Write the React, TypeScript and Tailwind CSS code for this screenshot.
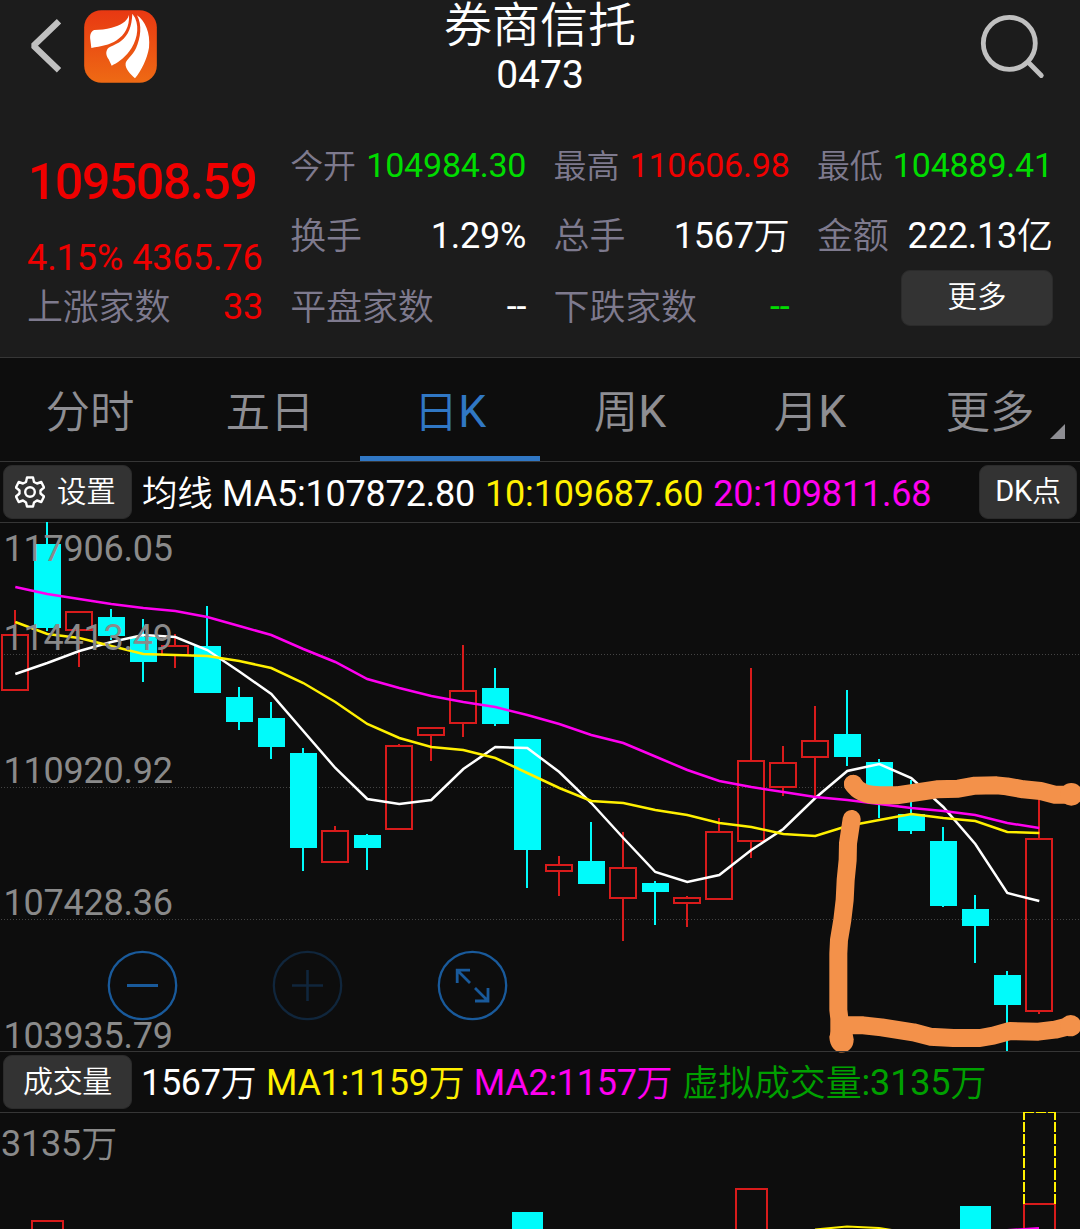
type Candle = [up: boolean, high: number, top: number, bottom: number, low: number];

const candles: Candle[] = [
  [true, 610, 634, 691, 691],
  [false, 522, 544, 628, 631],
  [true, 611, 611, 631, 667],
  [false, 609, 617, 636, 640],
  [false, 619, 637, 662, 682],
  [true, 634, 645, 656, 668],
  [false, 606, 646, 693, 693],
  [false, 687, 697, 722, 730],
  [false, 702, 718, 747, 759],
  [false, 748, 753, 848, 871],
  [true, 826, 830, 863, 863],
  [false, 834, 835, 848, 870],
  [true, 744, 745, 830, 830],
  [true, 727, 727, 736, 761],
  [true, 645, 690, 724, 737],
  [false, 668, 688, 724, 726],
  [false, 739, 739, 850, 888],
  [true, 856, 864, 872, 896],
  [false, 822, 861, 884, 884],
  [true, 832, 867, 899, 941],
  [false, 881, 883, 892, 925],
  [true, 896, 897, 904, 927],
  [true, 818, 831, 900, 900],
  [true, 668, 760, 842, 858],
  [true, 746, 762, 788, 796],
  [true, 706, 740, 758, 797],
  [false, 690, 734, 757, 766],
  [false, 759, 762, 790, 818],
  [false, 780, 814, 831, 834],
  [false, 827, 841, 906, 907],
  [false, 895, 909, 926, 963],
  [false, 971, 975, 1005, 1051],
  [true, 790, 838, 1012, 1014],
];

const ma5 = [674, 663, 651, 642, 635, 637, 650, 671.5, 694, 731, 768, 799, 804, 800, 769, 747, 748, 772, 803, 838, 872, 882, 875, 850, 829, 798, 771, 764, 778, 807, 844, 893, 901];
const ma10 = [622, 634, 638, 646, 654, 655, 656, 661, 668, 683, 702, 724, 738, 747, 750, 758, 773, 788, 801, 803, 810, 815, 823, 827, 834, 836, 826, 820, 814, 818, 821, 832, 833];
const ma20 = [587, 594, 599, 604, 608, 611, 617, 626, 635, 649, 662, 679, 688, 696, 702, 707, 715, 724, 735, 743, 756.5, 770, 781, 787, 792, 797, 800, 804, 808, 811, 815, 823, 828];

const centre = (i: number) => 15 + 32 * i;
const points = (ys: number[]) => ys.map((y, i) => `${centre(i) + 0.3},${y}`).join(" ");

function Candlestick({ index, data }: { index: number; data: Candle }) {
  const [up, high, top, bottom, low] = data;
  const x = centre(index);
  if (!up) {
    return (
      <g fill="#00fbfb">
        <rect x={x - 1} y={high} width={2} height={low - high} />
        <rect x={x - 13} y={top} width={27} height={bottom - top} />
      </g>
    );
  }
  return (
    <g fill="#d81b1b">
      <rect x={x - 1} y={high} width={2} height={top - high} />
      <rect x={x - 1} y={bottom} width={2} height={low - bottom} />
      <rect x={x - 13} y={top + 1} width={26} height={bottom - top - 2} fill="none" stroke="#d81b1b" strokeWidth={2} />
    </g>
  );
}

function Logo() {
  return (
    <svg className="ml-[21px] mt-[10px] h-[73px] w-[73px] shrink-0" viewBox="252 30 219 219">
      <defs>
        <linearGradient id="logo" x1="0" y1="0" x2="0" y2="1">
          <stop offset="0" stopColor="#e83812" />
          <stop offset="1" stopColor="#ee6a14" />
        </linearGradient>
      </defs>
      <rect x="252.500" y="30.500" width="218" height="218" rx="52" fill="url(#logo)" />
      <g fill="#fff">
        <path d="M387 45C381 66 361 76 335 83C318 88 300 89 283 90C272 94 269 106 271 119L274 144C304 139 327 136 350 121C374 104 389 81 387 45Z" />
        <path d="M397 41C395 80 386 105 363 123C347 135 330 139 323 146C315 158 320 168 326 178L335 197C351 190 371 176 388 154C409 127 420 85 405 53Z" />
        <path d="M411 46C427 75 422 113 408 145C398 166 381 178 377 189C374 207 392 222 405 235C425 210 441 177 447 143C452 99 435 62 411 46Z" />
      </g>
    </svg>
  );
}

/* Chinese run, drawn a little lighter than the digits beside it */
function Han({ children }: { children: string }) {
  return <span className="inline-block translate-y-px font-[350]">{children}</span>;
}

function Stat({ label, value, unit, tone, small }: { label: string; value: string; unit?: string; tone: string; small?: boolean }) {
  return (
    <div className={`flex h-full items-center justify-between ${small ? "text-[34px]" : "text-[36px]"}`}>
      <span className={`font-[350] tracking-[-0.2px] text-[#7e7a8e] ${small ? "pt-px text-[33px]" : "pt-[2px]"}`}>{label}</span>
      <span className={small ? `-mt-px ${tone}` : tone}>
        {value}
        {unit && <Han>{unit}</Han>}
      </span>
    </div>
  );
}

function PriceChart() {
  return (
    <svg className="block h-[528px] w-full overflow-visible" viewBox="0 523 1080 528">
      <g stroke="#444" strokeWidth={1} strokeDasharray="1 2">
        <path d="M1 654.500H1080M1 787.500H1080M1 919.500H1080" />
      </g>
      {candles.map((c, i) => (
        <Candlestick key={i} index={i} data={c} />
      ))}
      <g fill="none" strokeWidth={2.500}>
        <polyline points={points(ma5)} stroke="#fff" />
        <polyline points={points(ma10)} stroke="#fff000" />
        <polyline points={points(ma20)} stroke="#ff00f0" />
      </g>
      <g fill="#8a8a8a" fontSize={36} letterSpacing="0">
        <text x="3.500" y="561" textLength="169.500">117906.05</text>
        <text x="3.500" y="649.500" textLength="169.500">114413.49</text>
        <text x="3.500" y="783" textLength="169.500">110920.92</text>
        <text x="3.500" y="915" textLength="169.500">107428.36</text>
        <text x="3.500" y="1048" textLength="169.500">103935.79</text>
      </g>
      <g fill="none" stroke="#195a9b" strokeWidth={2.300}>
        <circle cx="142.500" cy="985.500" r="33.700" />
        <path d="M127 985.500H158" strokeWidth={3} />
        <circle cx="472.500" cy="985.500" r="33.700" />
        <path d="M470 983L457.500 970.500M457.200 983V970.200H470M475 988L488 1001M475 1001H488V988" strokeWidth={2.800} />
      </g>
      <g fill="none" stroke="#10263c" strokeWidth={2.300}>
        <circle cx="307.500" cy="985.500" r="33.700" />
        <path d="M292 985.500H323M307.500 970V1001" strokeWidth={2.600} />
      </g>
      <g transform="translate(700 650) scale(.33333)" fill="none" stroke="#f3914a" strokeWidth={54} strokeLinecap="round" strokeLinejoin="round">
        <path d="M459 402Q480 436 540 436H590L710 418L775 416L825 407L890 406L920 409L970 418L1022 423L1065 434H1112" />
        <path d="M455 507L444 580L443 630L437 690L434 750L427 810L417 870L415 910V1080L418 1105V1165" />
        <path d="M430 1126H490L545 1132L640 1147L690 1160L760 1164H840L880 1157L930 1143L1015 1145L1065 1139L1112 1127" />
        <g fill="#f3914a" stroke="none">
          <circle cx="460" cy="402" r="28" />
          <circle cx="1114" cy="433" r="34" />
          <circle cx="1112" cy="1127" r="32" />
          <path d="M388 1160C390 1225 462 1220 461 1168L456 1140H394Z" />
        </g>
      </g>
    </svg>
  );
}

function VolumeChart() {
  return (
    <svg className="block h-[116px] w-full" viewBox="0 1113 1080 116" overflow="visible">
      <text x="1" y="1156" fontSize={36} fill="#8a8a8a">
        3135<tspan fontWeight={350} dy="1">万</tspan>
      </text>
      <g fill="none" stroke="#d81b1b" strokeWidth={2}>
        <path d="M32 1240V1221H63V1240M736 1240V1189H767V1240M1024 1240V1204H1055V1240" />
      </g>
      <path d="M512 1212H543V1240H512ZM960 1206H991V1240H960Z" fill="#00fbfb" />
      <g fill="none" stroke="#fff000">
        <path d="M1024 1204V1112" strokeWidth={2} strokeDasharray="10 2" />
        <path d="M1055 1204V1112" strokeWidth={2} strokeDasharray="10 2" />
        <path d="M1024 1112.500H1056" strokeWidth={1} strokeDasharray="10 2" />
        <path d="M815 1229.500L847 1226.500L879 1228L911 1233" strokeWidth={2} />
      </g>
      <path d="M1007 1230L1039 1228" stroke="#ff00f0" strokeWidth={2} />
    </svg>
  );
}

const tabs: [han: string, latin: string][] = [["分时", ""], ["五日", ""], ["日", "K"], ["周", "K"], ["月", "K"], ["更多", ""]];

export default function App() {
  return (
    <div lang="zh-CN" className="flex h-[1229px] w-[1080px] flex-col overflow-hidden bg-[#0d0d0d] font-[family-name:Roboto,'Noto_Sans_CJK_SC',sans-serif] leading-none tracking-[-0.2px] whitespace-nowrap text-white">
      <section className="h-[358px] shrink-0 border-b border-[#363636] bg-[#1c1c1c]">
        <header className="flex h-[130px] items-start justify-between">
          <div className="flex w-[300px]">
            <svg className="ml-[28px] mt-[16px] h-[60px] w-[35px] shrink-0" viewBox="28 16 35 60" fill="none" stroke="#c0c0c0" strokeWidth={6.200}>
              <path d="M59 21.300L33.500 45.800L59 70.300" strokeLinejoin="bevel" />
            </svg>
            <Logo />
          </div>
          <div className="flex flex-col items-center">
            <h1 className="h-[48px] text-[48px] leading-[52px] font-[350] tracking-normal">券商信托</h1>
            <p className="text-[39px] leading-[54px] tracking-normal">0473</p>
          </div>
          <div className="flex w-[300px] justify-end pt-[12px] pr-[34px]">
            <svg className="h-[68px] w-[68px]" viewBox="978 12 68 68" fill="none" stroke="#c0c0c0" strokeWidth={4.800} strokeLinecap="round">
              <circle cx="1009.300" cy="43.300" r="26" />
              <path d="M1028.500 62.500L1041.300 75.500" />
            </svg>
          </div>
        </header>
        <div className="grid grid-cols-[236px_236px_236px_232px] gap-x-[27.300px] pl-[27px]">
          <div className="flex flex-col">
            <strong className="h-[104px] pl-px text-[50px] leading-[104px] font-medium tracking-[-1.400px] text-[#f00000]">109508.59</strong>
            <span className="h-[37px] text-[36px] leading-[49px] tracking-[-0.050px] text-[#f00000]">4.15% 4365.76</span>
            <div className="h-[71px] pt-px">
              <Stat label="上涨家数" value="33" tone="text-[#f00000]" />
            </div>
          </div>
          <div className="grid grid-rows-[71px_70px_72px]">
            <Stat label="今开" value="104984.30" tone="text-[#00dc00]" small />
            <Stat label="换手" value="1.29%" tone="" />
            <Stat label="平盘家数" value="--" tone="" />
          </div>
          <div className="grid grid-rows-[71px_70px_72px]">
            <Stat label="最高" value="110606.98" tone="text-[#f00000]" small />
            <Stat label="总手" value="1567" unit="万" tone="" />
            <Stat label="下跌家数" value="--" tone="text-[#00dc00]" />
          </div>
          <div className="grid grid-rows-[71px_70px_72px]">
            <Stat label="最低" value="104889.41" tone="text-[#00dc00]" small />
            <Stat label="金额" value="222.13" unit="亿" tone="" />
            <button className="-mt-px ml-[84px] flex h-[56px] w-[152px] items-center justify-center rounded-[9px] border border-[#2b2b2b] bg-[#333] text-[29.500px] font-[350]">更多</button>
          </div>
        </div>
      </section>

      <nav className="grid h-[104px] shrink-0 grid-cols-6 border-b border-[#363636] text-[44.500px] tracking-normal">
        {tabs.map(([han, latin], i) => (
          <div key={i} className={i === 2 ? "relative border-b-[5px] border-[#3077c4] pt-[11px] text-center leading-[87px] text-[#3077c4]" : "relative pt-[11px] text-center leading-[87px] text-[#8e8e93]"}>
            <Han>{han}</Han>
            {latin}
            {i === 5 && (
              <svg className="absolute right-[15px] bottom-[22px] h-[15px] w-[15px]" viewBox="0 0 15 15">
                <path d="M15 0V15H0Z" fill="#8e8e93" />
              </svg>
            )}
          </div>
        ))}
      </nav>

      <div className="flex h-[61px] shrink-0 items-center border-b border-[#363636] pr-[3px] pl-[3px] text-[36px]">
        <button className="flex h-[54px] w-[129px] items-center rounded-[9px] border border-[#2b2b2b] bg-[#333] pl-[11px] text-[29.500px] font-[350]">
          <svg className="mr-[12px] h-[32px] w-[30px]" viewBox="0 0 30 32" fill="none" stroke="#fff" strokeWidth={2.400} strokeLinejoin="round">
            <path d="M12 1.500H18L19 6L22 7.500L26.300 6L29 11.500L25.500 14.500V17.500L29 20.500L26.300 26L22 24.500L19 26.500L18 30.500H12L11 26.500L8 24.500L3.700 26L1 20.500L4.500 17.500V14.500L1 11.500L3.700 6L8 7.500L11 6Z" />
            <circle cx="15" cy="16" r="4.800" />
          </svg>
          <span className="pt-px">设置</span>
        </button>
        <span className="mt-[3px] ml-[10px] flex"><span className="mr-[9.500px] translate-y-px text-[35.500px] font-[350]">均线</span>MA5:107872.80</span>
        <span className="mt-[3px] ml-[10px] text-[#fff000]">10:109687.60</span>
        <span className="mt-[3px] ml-[10px] text-[#ff00f0]">20:109811.68</span>
        <button className="ml-auto flex h-[54px] w-[98px] items-center justify-center rounded-[9px] border border-[#2b2b2b] bg-[#333] pb-px text-[29px]">DK<Han>点</Han></button>
      </div>

      <PriceChart />

      <div className="flex h-[62px] shrink-0 items-center border-y border-[#363636] pl-[3px] text-[36px] tracking-[-0.300px]">
        <button className="flex h-[54px] w-[129px] items-center justify-center rounded-[9px] border border-[#2b2b2b] bg-[#333] text-[30px] font-[350]">成交量</button>
        <span className="mt-[2px] ml-[9px]">1567<Han>万</Han></span>
        <span className="mt-[2px] ml-[9.500px] text-[#fff000]">MA1:1159<Han>万</Han></span>
        <span className="mt-[2px] ml-[9.500px] text-[#ff00f0]">MA2:1157<Han>万</Han></span>
        <span className="mt-[2px] ml-[10px] tracking-[-0.150px] text-[#00a000]"><Han>虚拟成交量</Han>:3135<Han>万</Han></span>
      </div>

      <VolumeChart />
    </div>
  );
}
